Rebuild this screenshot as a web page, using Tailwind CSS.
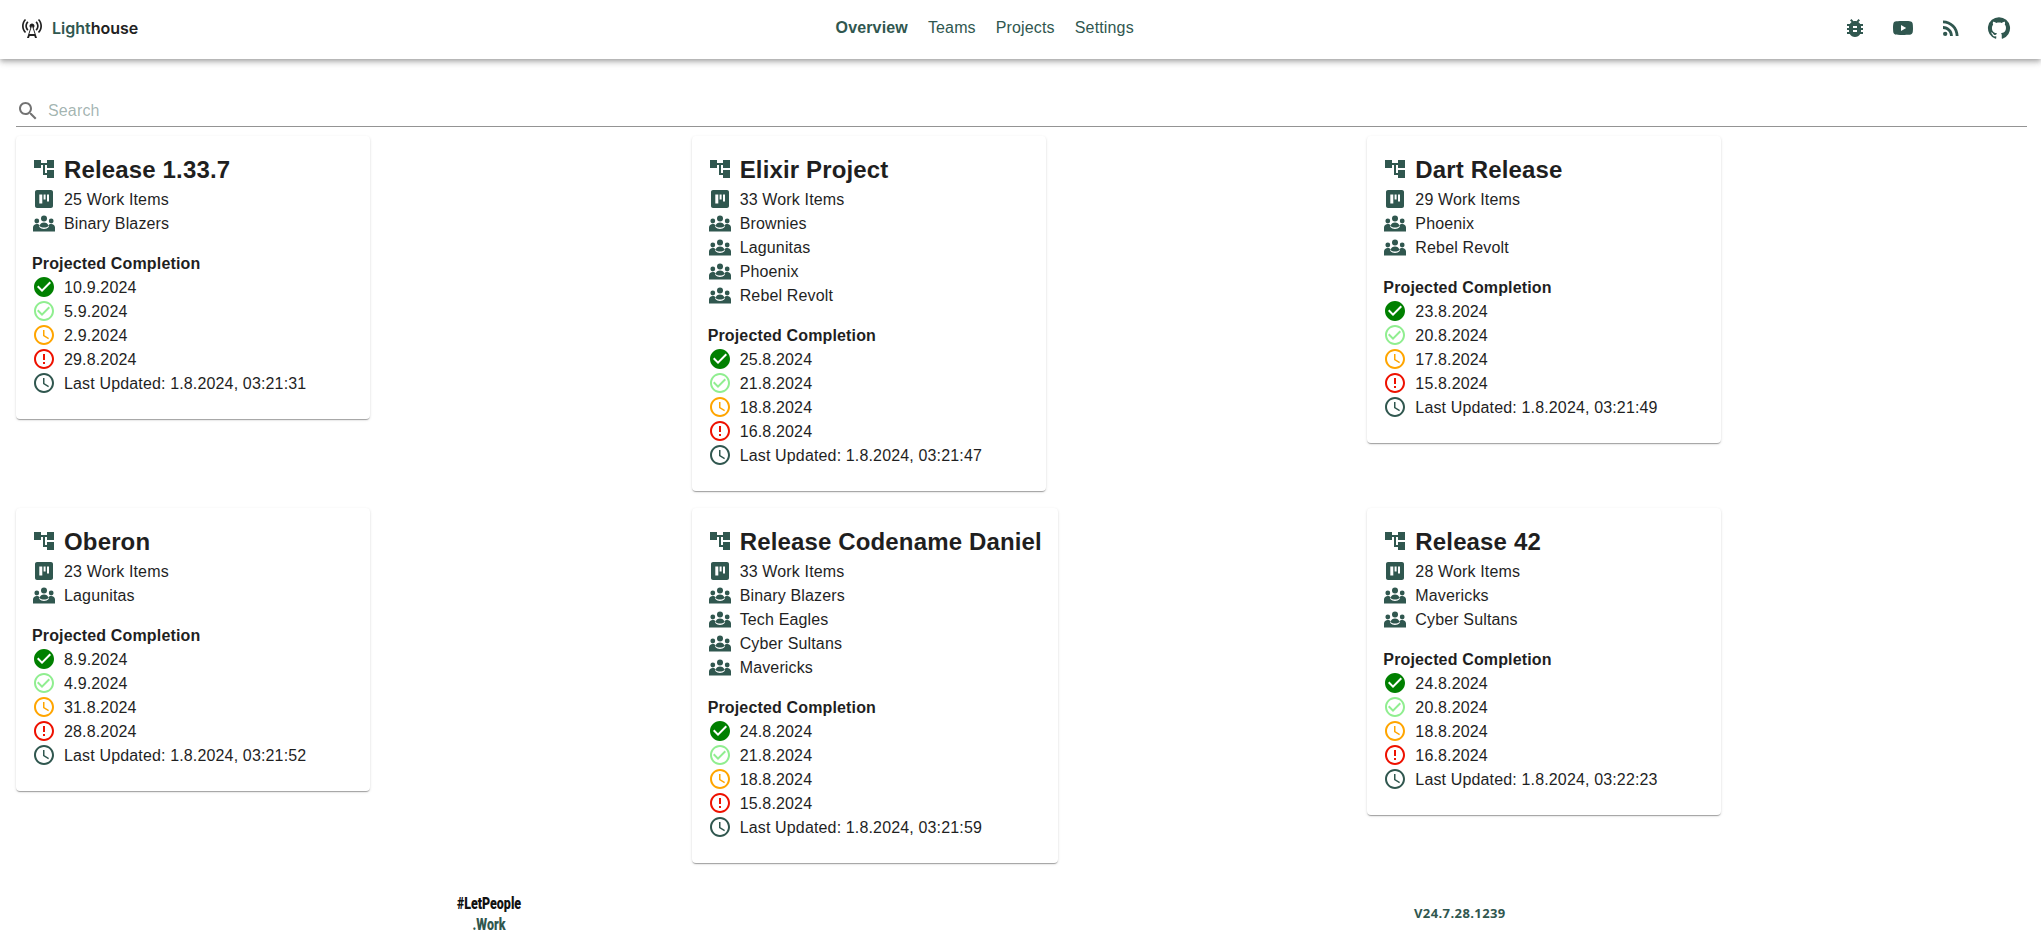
<!doctype html>
<html lang="en">
<head>
<meta charset="utf-8">
<title>Lighthouse</title>
<script src="https://cdn.jsdelivr.net/npm/@tailwindcss/browser@4"></script>
</head>
<body class="bg-white font-['Liberation_Sans',Arial,sans-serif] text-base tracking-[0.15px] text-[#1f1f1f] h-[938px] overflow-hidden">
<svg class="hidden" aria-hidden="true">
  <symbol id="tree" viewBox="0 0 24 24"><path d="M22 11V3h-7v3H9V3H2v8h7V8h2v10h4v3h7v-8h-7v3h-2V8h2v3z"/></symbol>
  <symbol id="kanban" viewBox="0 0 24 24"><path fill-rule="evenodd" d="M19 3H5c-1.100 0-2 .9-2 2v14c0 1.100.9 2 2 2h14c1.100 0 2-.9 2-2V5c0-1.100-.9-2-2-2zM7.300 7.500h3v9h-3zM11.600 7.500h2v5h-2zM15 7.500h2v7h-2z"/></symbol>
  <symbol id="groups" viewBox="0 0 24 24"><circle cx="12" cy="7.500" r="3"/><circle cx="4.800" cy="10" r="2.400"/><circle cx="19.200" cy="10" r="2.400"/><path d="M7.500 15c.5-2.500 2.500-3.500 4.500-3.500s4 1 4.500 3.500c-1.200 1-2.800 1.500-4.500 1.500s-3.300-.5-4.500-1.500z"/><path d="M1 20.500v-4C1 14.500 2.800 13 4.800 13c1.200 0 2.200.5 2.900 1.200-.3.5-.5 1-.6 1.600C8.500 17.500 10.200 18 12 18s3.500-.5 4.900-2.200c-.1-.6-.3-1.100-.6-1.600.7-.7 1.700-1.200 2.900-1.200 2 0 3.800 1.500 3.800 3.500v4z"/></symbol>
  <symbol id="check" viewBox="0 0 24 24"><path d="M12 2C6.480 2 2 6.480 2 12s4.480 10 10 10 10-4.480 10-10S17.520 2 12 2zm-2 15-5-5 1.410-1.410L10 14.170l7.590-7.590L19 8l-9 9z"/></symbol>
  <symbol id="checko" viewBox="0 0 24 24"><path d="M16.590 7.580 10 14.170l-3.590-3.580L5 12l5 5 8-8zM12 2C6.480 2 2 6.480 2 12s4.480 10 10 10 10-4.480 10-10S17.520 2 12 2zm0 18c-4.420 0-8-3.580-8-8s3.580-8 8-8 8 3.580 8 8-3.580 8-8 8z"/></symbol>
  <symbol id="clock" viewBox="0 0 24 24"><path d="M11.990 2C6.470 2 2 6.480 2 12s4.470 10 9.990 10C17.520 22 22 17.520 22 12S17.520 2 11.990 2zM12 20c-4.420 0-8-3.580-8-8s3.580-8 8-8 8 3.580 8 8-3.580 8-8 8z"/><path d="M12.500 7H11v6l5.250 3.150.750-1.230-4.500-2.670z"/></symbol>
  <symbol id="error" viewBox="0 0 24 24"><path d="M11 15h2v2h-2zm0-8h2v6h-2zm.990-5C6.470 2 2 6.480 2 12s4.470 10 9.990 10C17.520 22 22 17.520 22 12S17.520 2 11.990 2zM12 20c-4.420 0-8-3.580-8-8s3.580-8 8-8 8 3.580 8 8-3.580 8-8 8z"/></symbol>
</svg>

<header class="h-[59px] bg-white flex items-center justify-between pl-5 pr-[22px] pb-1 shadow-[0_2px_4px_-1px_rgba(0,0,0,0.2),0_4px_5px_0_rgba(0,0,0,0.14),0_1px_10px_0_rgba(0,0,0,0.12)]">
  <div class="flex items-center gap-2 text-[#212121]">
    <svg class="w-6 h-6 fill-current" viewBox="0 0 24 24"><path d="m7.300 14.700 1.200-1.200c-1-1-1.500-2.300-1.500-3.500 0-1.300.500-2.600 1.500-3.500L7.300 5.300c-1.300 1.300-2 3-2 4.700s.700 3.400 2 4.700zM19.100 2.900l-1.200 1.200c1.600 1.600 2.400 3.800 2.400 5.900 0 2.100-.800 4.300-2.400 5.900l1.200 1.200c2-2 2.900-4.500 2.900-7.100 0-2.600-1-5.100-2.900-7.100zM6.100 4.100 4.900 2.900C3 4.900 2 7.400 2 10c0 2.600 1 5.100 2.900 7.100l1.200-1.200c-1.600-1.600-2.400-3.800-2.400-5.900 0-2.100.800-4.300 2.400-5.900zm10.600 10.600c1.300-1.300 2-3 2-4.700-.100-1.700-.700-3.400-2-4.700l-1.200 1.200c1 1 1.500 2.300 1.500 3.500 0 1.300-.500 2.600-1.500 3.500l1.200 1.200zM14.500 10c0-1.380-1.120-2.500-2.500-2.500S9.500 8.620 9.500 10c0 .760.340 1.420.870 1.880L7 22h2l.670-2h4.670l.660 2h2l-3.370-10.120c.530-.460.870-1.120.870-1.880zm-5.170 8L12 10l2.670 8H9.330z"/></svg>
    <span class="font-['Inter',sans-serif] font-semibold text-base tracking-normal"><span class="text-[#30574f]">Light</span>house</span>
  </div>
  <nav class="mr-1 flex items-center gap-5 text-[#30574f]">
    <a class="font-bold">Overview</a>
    <a>Teams</a>
    <a>Projects</a>
    <a>Settings</a>
  </nav>
  <div class="flex items-center gap-2 text-[#30574f]">
    <a class="p-2"><svg class="w-6 h-6 fill-current" viewBox="0 0 24 24"><path d="M20 8h-2.810c-.450-.780-1.070-1.450-1.820-1.960L17 4.410 15.590 3l-2.170 2.170C12.960 5.060 12.490 5 12 5c-.490 0-.960.060-1.410.170L8.410 3 7 4.410l1.620 1.630C7.880 6.550 7.260 7.220 6.810 8H4v2h2.090c-.050.330-.090.660-.090 1v1H4v2h2v1c0 .340.040.670.090 1H4v2h2.810c1.040 1.790 2.970 3 5.190 3s4.150-1.210 5.190-3H20v-2h-2.090c.050-.330.090-.660.090-1v-1h2v-2h-2v-1c0-.340-.040-.670-.090-1H20V8zm-6 8h-4v-2h4v2zm0-4h-4v-2h4v2z"/></svg></a>
    <a class="p-2"><svg class="w-6 h-6 fill-current" viewBox="0 0 24 24"><path d="M10 15l5.190-3L10 9v6m11.560-7.830c.130.470.220 1.100.280 1.900.070.800.100 1.490.100 2.090L22 12c0 2.190-.160 3.800-.440 4.830-.250.900-.830 1.480-1.730 1.730-.470.130-1.330.220-2.650.280-1.300.070-2.490.100-3.590.100L12 19c-4.190 0-6.800-.160-7.830-.44-.900-.250-1.480-.830-1.730-1.730-.130-.470-.220-1.100-.280-1.900-.070-.800-.100-1.490-.100-2.090L2 12c0-2.190.160-3.800.44-4.830.250-.900.830-1.480 1.730-1.730.470-.130 1.330-.220 2.650-.280 1.300-.070 2.490-.100 3.590-.100L12 5c4.190 0 6.800.160 7.830.44.900.250 1.480.830 1.730 1.730z"/></svg></a>
    <a class="p-2"><svg class="w-6 h-6 fill-current" viewBox="0 0 24 24"><circle cx="6.180" cy="17.820" r="2.180"/><path d="M4 4.440v2.830c7.030 0 12.730 5.700 12.730 12.730h2.830c0-8.590-6.970-15.560-15.560-15.560zm0 5.660v2.830c3.900 0 7.070 3.170 7.070 7.070h2.830c0-5.470-4.430-9.900-9.900-9.900z"/></svg></a>
    <a class="p-2"><svg class="w-6 h-6 fill-current" viewBox="0 0 24 24"><path d="M12 1.270a11 11 0 00-3.480 21.460c.550.090.730-.280.730-.550v-1.840c-3.030.640-3.670-1.460-3.670-1.460-.550-1.290-1.280-1.650-1.280-1.650-.920-.650.100-.650.100-.650 1.100 0 1.730 1.100 1.730 1.100.920 1.650 2.570 1.200 3.210.920a2 2 0 01.640-1.470c-2.470-.270-5.040-1.190-5.040-5.500 0-1.100.460-2.100 1.200-2.840a3.760 3.760 0 010-2.930s.910-.280 3.110 1.100c1.800-.490 3.700-.490 5.500 0 2.100-1.380 3.020-1.100 3.020-1.100a3.760 3.760 0 010 2.930c.830.740 1.200 1.740 1.200 2.940 0 4.210-2.570 5.130-5.040 5.400.450.370.820.920.820 2.020v3.030c0 .270.100.640.730.550A11 11 0 0012 1.270"/></svg></a>
  </div>
</header>

<main class="pl-4 pr-[14px]">
  <label class="mt-9 mb-[9px] h-8 flex items-center gap-2 border-b border-[#949494]">
    <svg class="w-6 h-6 fill-black/55" viewBox="0 0 24 24"><path d="M15.500 14h-.790l-.280-.270C15.410 12.590 16 11.110 16 9.500 16 5.910 13.090 3 9.500 3S3 5.910 3 9.500 5.910 16 9.500 16c1.610 0 3.090-.590 4.230-1.570l.270.280v.790l5 4.990L20.490 19l-4.990-5zm-6 0C7.010 14 5 11.990 5 9.500S7.010 5 9.500 5 14 7.010 14 9.500 11.990 14 9.500 14z"/></svg>
    <input class="flex-1 outline-none placeholder:text-[#30574f]/45" placeholder="Search">
  </label>

  <div class="grid grid-cols-3 gap-x-4 gap-y-[17px] items-start">

    <!-- Release 1.33.7 -->
    <article class="w-fit min-w-[354px] rounded bg-white px-4 pt-4 pb-6 shadow-[0_2px_1px_-1px_rgba(0,0,0,0.2),0_1px_1px_0_rgba(0,0,0,0.14),0_1px_3px_0_rgba(0,0,0,0.12)]">
      <h2 class="h-[35px] flex items-start gap-2 text-2xl leading-9 font-bold"><svg class="mt-[5px] w-6 h-6 fill-[#30574f]"><use href="#tree"/></svg>Release 1.33.7</h2>
      <div class="h-6 flex items-start gap-2 leading-[26px]"><svg class="w-6 h-6 fill-[#30574f]"><use href="#kanban"/></svg>25 Work Items</div>
      <div class="h-6 flex items-start gap-2 leading-[26px]"><svg class="w-6 h-6 fill-[#30574f]"><use href="#groups"/></svg>Binary Blazers</div>
      <h3 class="mt-4 h-6 font-bold leading-[26px]">Projected Completion</h3>
      <div class="h-6 flex items-start gap-2 leading-[26px]"><svg class="w-6 h-6 fill-[#008000]"><use href="#check"/></svg>10.9.2024</div>
      <div class="h-6 flex items-start gap-2 leading-[26px]"><svg class="w-6 h-6 fill-[#90ee90]"><use href="#checko"/></svg>5.9.2024</div>
      <div class="h-6 flex items-start gap-2 leading-[26px]"><svg class="w-6 h-6 fill-[#ffa500]"><use href="#clock"/></svg>2.9.2024</div>
      <div class="h-6 flex items-start gap-2 leading-[26px]"><svg class="w-6 h-6 fill-[#ee1100]"><use href="#error"/></svg>29.8.2024</div>
      <div class="h-6 flex items-start gap-2 leading-[26px]"><svg class="w-6 h-6 fill-[#30574f]"><use href="#clock"/></svg>Last Updated: 1.8.2024, 03:21:31</div>
    </article>

    <!-- Elixir Project -->
    <article class="w-fit min-w-[354px] rounded bg-white px-4 pt-4 pb-6 shadow-[0_2px_1px_-1px_rgba(0,0,0,0.2),0_1px_1px_0_rgba(0,0,0,0.14),0_1px_3px_0_rgba(0,0,0,0.12)]">
      <h2 class="h-[35px] flex items-start gap-2 text-2xl leading-9 font-bold"><svg class="mt-[5px] w-6 h-6 fill-[#30574f]"><use href="#tree"/></svg>Elixir Project</h2>
      <div class="h-6 flex items-start gap-2 leading-[26px]"><svg class="w-6 h-6 fill-[#30574f]"><use href="#kanban"/></svg>33 Work Items</div>
      <div class="h-6 flex items-start gap-2 leading-[26px]"><svg class="w-6 h-6 fill-[#30574f]"><use href="#groups"/></svg>Brownies</div>
      <div class="h-6 flex items-start gap-2 leading-[26px]"><svg class="w-6 h-6 fill-[#30574f]"><use href="#groups"/></svg>Lagunitas</div>
      <div class="h-6 flex items-start gap-2 leading-[26px]"><svg class="w-6 h-6 fill-[#30574f]"><use href="#groups"/></svg>Phoenix</div>
      <div class="h-6 flex items-start gap-2 leading-[26px]"><svg class="w-6 h-6 fill-[#30574f]"><use href="#groups"/></svg>Rebel Revolt</div>
      <h3 class="mt-4 h-6 font-bold leading-[26px]">Projected Completion</h3>
      <div class="h-6 flex items-start gap-2 leading-[26px]"><svg class="w-6 h-6 fill-[#008000]"><use href="#check"/></svg>25.8.2024</div>
      <div class="h-6 flex items-start gap-2 leading-[26px]"><svg class="w-6 h-6 fill-[#90ee90]"><use href="#checko"/></svg>21.8.2024</div>
      <div class="h-6 flex items-start gap-2 leading-[26px]"><svg class="w-6 h-6 fill-[#ffa500]"><use href="#clock"/></svg>18.8.2024</div>
      <div class="h-6 flex items-start gap-2 leading-[26px]"><svg class="w-6 h-6 fill-[#ee1100]"><use href="#error"/></svg>16.8.2024</div>
      <div class="h-6 flex items-start gap-2 leading-[26px]"><svg class="w-6 h-6 fill-[#30574f]"><use href="#clock"/></svg>Last Updated: 1.8.2024, 03:21:47</div>
    </article>

    <!-- Dart Release -->
    <article class="w-fit min-w-[354px] rounded bg-white px-4 pt-4 pb-6 shadow-[0_2px_1px_-1px_rgba(0,0,0,0.2),0_1px_1px_0_rgba(0,0,0,0.14),0_1px_3px_0_rgba(0,0,0,0.12)]">
      <h2 class="h-[35px] flex items-start gap-2 text-2xl leading-9 font-bold"><svg class="mt-[5px] w-6 h-6 fill-[#30574f]"><use href="#tree"/></svg>Dart Release</h2>
      <div class="h-6 flex items-start gap-2 leading-[26px]"><svg class="w-6 h-6 fill-[#30574f]"><use href="#kanban"/></svg>29 Work Items</div>
      <div class="h-6 flex items-start gap-2 leading-[26px]"><svg class="w-6 h-6 fill-[#30574f]"><use href="#groups"/></svg>Phoenix</div>
      <div class="h-6 flex items-start gap-2 leading-[26px]"><svg class="w-6 h-6 fill-[#30574f]"><use href="#groups"/></svg>Rebel Revolt</div>
      <h3 class="mt-4 h-6 font-bold leading-[26px]">Projected Completion</h3>
      <div class="h-6 flex items-start gap-2 leading-[26px]"><svg class="w-6 h-6 fill-[#008000]"><use href="#check"/></svg>23.8.2024</div>
      <div class="h-6 flex items-start gap-2 leading-[26px]"><svg class="w-6 h-6 fill-[#90ee90]"><use href="#checko"/></svg>20.8.2024</div>
      <div class="h-6 flex items-start gap-2 leading-[26px]"><svg class="w-6 h-6 fill-[#ffa500]"><use href="#clock"/></svg>17.8.2024</div>
      <div class="h-6 flex items-start gap-2 leading-[26px]"><svg class="w-6 h-6 fill-[#ee1100]"><use href="#error"/></svg>15.8.2024</div>
      <div class="h-6 flex items-start gap-2 leading-[26px]"><svg class="w-6 h-6 fill-[#30574f]"><use href="#clock"/></svg>Last Updated: 1.8.2024, 03:21:49</div>
    </article>

    <!-- Oberon -->
    <article class="w-fit min-w-[354px] rounded bg-white px-4 pt-4 pb-6 shadow-[0_2px_1px_-1px_rgba(0,0,0,0.2),0_1px_1px_0_rgba(0,0,0,0.14),0_1px_3px_0_rgba(0,0,0,0.12)]">
      <h2 class="h-[35px] flex items-start gap-2 text-2xl leading-9 font-bold"><svg class="mt-[5px] w-6 h-6 fill-[#30574f]"><use href="#tree"/></svg>Oberon</h2>
      <div class="h-6 flex items-start gap-2 leading-[26px]"><svg class="w-6 h-6 fill-[#30574f]"><use href="#kanban"/></svg>23 Work Items</div>
      <div class="h-6 flex items-start gap-2 leading-[26px]"><svg class="w-6 h-6 fill-[#30574f]"><use href="#groups"/></svg>Lagunitas</div>
      <h3 class="mt-4 h-6 font-bold leading-[26px]">Projected Completion</h3>
      <div class="h-6 flex items-start gap-2 leading-[26px]"><svg class="w-6 h-6 fill-[#008000]"><use href="#check"/></svg>8.9.2024</div>
      <div class="h-6 flex items-start gap-2 leading-[26px]"><svg class="w-6 h-6 fill-[#90ee90]"><use href="#checko"/></svg>4.9.2024</div>
      <div class="h-6 flex items-start gap-2 leading-[26px]"><svg class="w-6 h-6 fill-[#ffa500]"><use href="#clock"/></svg>31.8.2024</div>
      <div class="h-6 flex items-start gap-2 leading-[26px]"><svg class="w-6 h-6 fill-[#ee1100]"><use href="#error"/></svg>28.8.2024</div>
      <div class="h-6 flex items-start gap-2 leading-[26px]"><svg class="w-6 h-6 fill-[#30574f]"><use href="#clock"/></svg>Last Updated: 1.8.2024, 03:21:52</div>
    </article>

    <!-- Release Codename Daniel -->
    <article class="w-fit min-w-[354px] rounded bg-white px-4 pt-4 pb-6 shadow-[0_2px_1px_-1px_rgba(0,0,0,0.2),0_1px_1px_0_rgba(0,0,0,0.14),0_1px_3px_0_rgba(0,0,0,0.12)]">
      <h2 class="h-[35px] flex items-start gap-2 text-2xl leading-9 font-bold whitespace-nowrap"><svg class="mt-[5px] w-6 h-6 fill-[#30574f]"><use href="#tree"/></svg>Release Codename Daniel</h2>
      <div class="h-6 flex items-start gap-2 leading-[26px]"><svg class="w-6 h-6 fill-[#30574f]"><use href="#kanban"/></svg>33 Work Items</div>
      <div class="h-6 flex items-start gap-2 leading-[26px]"><svg class="w-6 h-6 fill-[#30574f]"><use href="#groups"/></svg>Binary Blazers</div>
      <div class="h-6 flex items-start gap-2 leading-[26px]"><svg class="w-6 h-6 fill-[#30574f]"><use href="#groups"/></svg>Tech Eagles</div>
      <div class="h-6 flex items-start gap-2 leading-[26px]"><svg class="w-6 h-6 fill-[#30574f]"><use href="#groups"/></svg>Cyber Sultans</div>
      <div class="h-6 flex items-start gap-2 leading-[26px]"><svg class="w-6 h-6 fill-[#30574f]"><use href="#groups"/></svg>Mavericks</div>
      <h3 class="mt-4 h-6 font-bold leading-[26px]">Projected Completion</h3>
      <div class="h-6 flex items-start gap-2 leading-[26px]"><svg class="w-6 h-6 fill-[#008000]"><use href="#check"/></svg>24.8.2024</div>
      <div class="h-6 flex items-start gap-2 leading-[26px]"><svg class="w-6 h-6 fill-[#90ee90]"><use href="#checko"/></svg>21.8.2024</div>
      <div class="h-6 flex items-start gap-2 leading-[26px]"><svg class="w-6 h-6 fill-[#ffa500]"><use href="#clock"/></svg>18.8.2024</div>
      <div class="h-6 flex items-start gap-2 leading-[26px]"><svg class="w-6 h-6 fill-[#ee1100]"><use href="#error"/></svg>15.8.2024</div>
      <div class="h-6 flex items-start gap-2 leading-[26px]"><svg class="w-6 h-6 fill-[#30574f]"><use href="#clock"/></svg>Last Updated: 1.8.2024, 03:21:59</div>
    </article>

    <!-- Release 42 -->
    <article class="w-fit min-w-[354px] rounded bg-white px-4 pt-4 pb-6 shadow-[0_2px_1px_-1px_rgba(0,0,0,0.2),0_1px_1px_0_rgba(0,0,0,0.14),0_1px_3px_0_rgba(0,0,0,0.12)]">
      <h2 class="h-[35px] flex items-start gap-2 text-2xl leading-9 font-bold"><svg class="mt-[5px] w-6 h-6 fill-[#30574f]"><use href="#tree"/></svg>Release 42</h2>
      <div class="h-6 flex items-start gap-2 leading-[26px]"><svg class="w-6 h-6 fill-[#30574f]"><use href="#kanban"/></svg>28 Work Items</div>
      <div class="h-6 flex items-start gap-2 leading-[26px]"><svg class="w-6 h-6 fill-[#30574f]"><use href="#groups"/></svg>Mavericks</div>
      <div class="h-6 flex items-start gap-2 leading-[26px]"><svg class="w-6 h-6 fill-[#30574f]"><use href="#groups"/></svg>Cyber Sultans</div>
      <h3 class="mt-4 h-6 font-bold leading-[26px]">Projected Completion</h3>
      <div class="h-6 flex items-start gap-2 leading-[26px]"><svg class="w-6 h-6 fill-[#008000]"><use href="#check"/></svg>24.8.2024</div>
      <div class="h-6 flex items-start gap-2 leading-[26px]"><svg class="w-6 h-6 fill-[#90ee90]"><use href="#checko"/></svg>20.8.2024</div>
      <div class="h-6 flex items-start gap-2 leading-[26px]"><svg class="w-6 h-6 fill-[#ffa500]"><use href="#clock"/></svg>18.8.2024</div>
      <div class="h-6 flex items-start gap-2 leading-[26px]"><svg class="w-6 h-6 fill-[#ee1100]"><use href="#error"/></svg>16.8.2024</div>
      <div class="h-6 flex items-start gap-2 leading-[26px]"><svg class="w-6 h-6 fill-[#30574f]"><use href="#clock"/></svg>Last Updated: 1.8.2024, 03:22:23</div>
    </article>
  </div>
</main>

<footer class="mt-[30px] flex items-center">
  <div class="ml-[439px] w-[100px] flex flex-col items-center font-['Roboto',sans-serif] font-black text-base leading-[21px] tracking-normal scale-x-[0.78]">
    <span class="text-[#111]">#LetPeople</span>
    <span class="text-[#30574f]">.Work</span>
  </div>
  <div class="ml-[875px] font-['Open_Sans',sans-serif] font-bold text-[13px] tracking-[0.4px] text-[#30574f]">V24.7.28.1239</div>
</footer>
</body>
</html>
